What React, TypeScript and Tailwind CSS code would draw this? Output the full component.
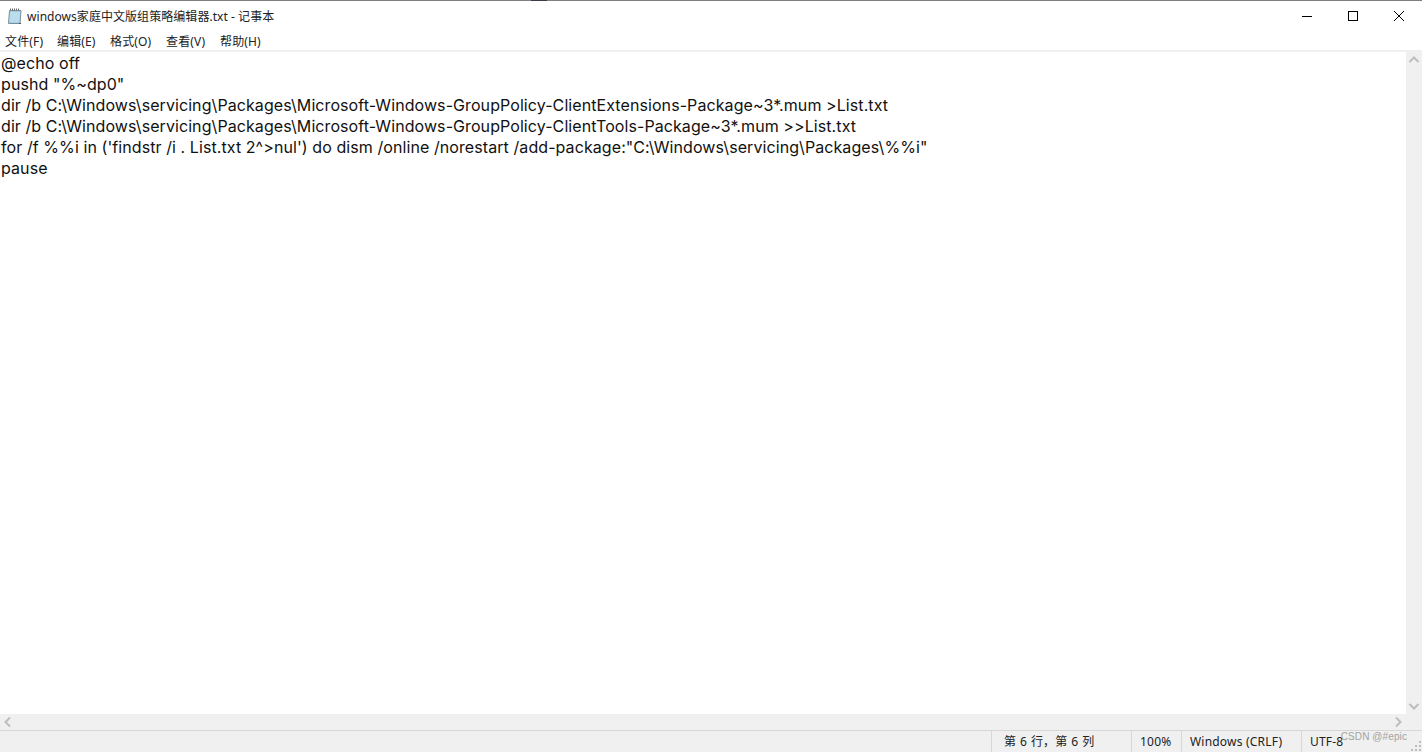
const cjk = 'font-["Noto_Sans","Noto_Sans_CJK_SC",sans-serif]';

const lines = [
  '@echo off',
  'pushd "%~dp0"',
  'dir /b C:\\Windows\\servicing\\Packages\\Microsoft-Windows-GroupPolicy-ClientExtensions-Package~3*.mum >List.txt',
  'dir /b C:\\Windows\\servicing\\Packages\\Microsoft-Windows-GroupPolicy-ClientTools-Package~3*.mum >>List.txt',
  'for /f %%i in (\'findstr /i . List.txt 2^>nul\') do dism /online /norestart /add-package:"C:\\Windows\\servicing\\Packages\\%%i"',
  'pause',
];

const menus = [
  { label: '文件(F)', w: 'w-[52px]' },
  { label: '编辑(E)', w: 'w-[53px]' },
  { label: '格式(O)', w: 'w-[56px]' },
  { label: '查看(V)', w: 'w-[54px]' },
  { label: '帮助(H)', w: 'w-[54px]' },
];

function NotepadIcon() {
  return (
    <svg width="16" height="17" viewBox="0 0 16 17" className="shrink-0">
      <path d="M3.500 2.500h11.500l-1 13h-11.500z" fill="#9fd0e4" stroke="#7d8f98" />
      <path d="M4 5h10M4 7h10M3.800 9h10M3.600 11h10M3.400 13h10" stroke="#d3ebf5" strokeWidth="1" />
      <path d="M4 1.500h10" stroke="#6b6b6b" strokeWidth="2" strokeDasharray="1 1" />
      <path d="M13 15.500h2" stroke="#555" />
    </svg>
  );
}

function Arrow({ d }: { d: string }) {
  return (
    <svg width="16" height="16" viewBox="0 0 16 16">
      <path d={d} fill="none" stroke="#bdbdbd" strokeWidth="2" />
    </svg>
  );
}

export default function App() {
  return (
    <div className={`h-[752px] w-[1422px] flex flex-col overflow-hidden relative bg-white text-black ${cjk}`}>
      {/* top edge of window */}
      <div className="h-px bg-[#7f7f7f] shrink-0 pl-[531px]">
        <div className="w-4 h-px bg-[#3a3a48]" />
      </div>

      {/* Title bar */}
      <div className="h-[29px] shrink-0 flex items-center">
        <div className="pl-[6px] flex items-center gap-[5px] flex-1 pt-[2px]">
          <NotepadIcon />
          <span className="text-[12px] leading-4 tracking-[0.05px] text-[#222]">windows家庭中文版组策略编辑器.txt - 记事本</span>
        </div>
        <div className="flex items-center">
          <div className="w-[46px] h-[29px] flex items-center justify-center">
            <svg width="10" height="10" viewBox="0 0 10 10"><path d="M0 5.500h10" stroke="#000" /></svg>
          </div>
          <div className="w-[46px] h-[29px] flex items-center justify-center">
            <svg width="10" height="10" viewBox="0 0 10 10"><rect x=".5" y=".5" width="9" height="9" fill="none" stroke="#000" /></svg>
          </div>
          <div className="w-[46px] h-[29px] flex items-center justify-center">
            <svg width="10" height="10" viewBox="0 0 10 10"><path d="M0 0l10 10M10 0L0 10" stroke="#000" /></svg>
          </div>
        </div>
      </div>

      {/* Menu bar */}
      <div className="h-5 shrink-0 flex items-center pl-[5px] pt-1 text-[12px] leading-4 tracking-[0.15px] text-[#222]">
        {menus.map((m) => (
          <span key={m.label} className={m.w}>{m.label}</span>
        ))}
      </div>
      <div className="h-[2px] shrink-0 bg-[#f0f0f0]" />

      {/* Editor and vertical scrollbar */}
      <div className="flex-1 flex min-h-0">
        <div className='flex-1 pl-[1px] pt-px font-["Inter",sans-serif] text-[16px] tracking-[0.08px] leading-[21px] text-[#111] whitespace-pre overflow-hidden'>
          {lines.map((line) => (
            <div key={line} className="h-[21px]">{line}</div>
          ))}
        </div>
        <div className="w-4 bg-[#f0f0f0] flex flex-col justify-between">
          <Arrow d="M3.500 10L8 5.500l4.500 4.500" />
          <Arrow d="M3.500 6L8 10.500l4.500-4.500" />
        </div>
      </div>

      {/* Horizontal scrollbar */}
      <div className="h-4 shrink-0 bg-[#f0f0f0] flex justify-between pr-4">
        <Arrow d="M10 3.500L5.500 8l4.500 4.500" />
        <Arrow d="M6 3.500L10.500 8 6 12.500" />
      </div>

      {/* Status bar */}
      <div className="h-[22px] shrink-0 bg-[#f0f0f0] border-t border-[#d7d7d7] flex text-[12px] leading-4 tracking-[0.2px] text-[#222] relative">
        <div className="w-[991px]" />
        <div className="w-[140px] border-l border-[#d7d7d7] pl-3 flex items-center [word-spacing:0.5px]">第 6 行，第 6 列</div>
        <div className="w-[50px] border-l border-[#d7d7d7] pl-2 flex items-center">100%</div>
        <div className="w-[120px] border-l border-[#d7d7d7] pl-2 flex items-center">Windows (CRLF)</div>
        <div className="flex-1 border-l border-[#d7d7d7] pl-2 flex items-center">UTF-8</div>
        <span className='absolute right-[15px] top-[-1px] font-["Liberation_Sans",sans-serif] text-[10px] tracking-[0.1px] leading-[14px] text-[#a3a3a3]'>CSDN @#epic</span>
        <svg width="12" height="12" viewBox="0 0 12 12" className="absolute right-0 bottom-0">
          <path d="M9 9h2v2H9zM5 9h2v2H5zM1 9h2v2H1zM9 5h2v2H9zM5 5h2v2H5zM9 1h2v2H9z" fill="#bdbdbd" />
        </svg>
      </div>
    </div>
  );
}
